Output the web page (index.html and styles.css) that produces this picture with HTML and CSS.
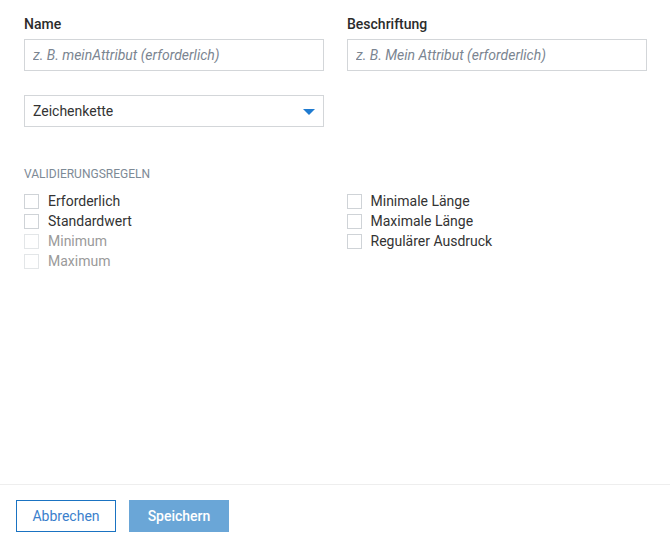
FILE: index.html
```html
<!DOCTYPE html>
<html lang="de">
<head>
<meta charset="utf-8">
<title>Attribut</title>
<link rel="stylesheet" href="styles.css">
</head>
<body>
<div class="page">
  <div class="content">
    <div class="row">
      <div class="field">
        <label class="label">Name</label>
        <input class="input" type="text" placeholder="z. B. meinAttribut (erforderlich)">
      </div>
      <div class="field">
        <label class="label">Beschriftung</label>
        <input class="input" type="text" placeholder="z. B. Mein Attribut (erforderlich)">
      </div>
    </div>
    <div class="row">
      <div class="select">
        <span>Zeichenkette</span>
        <svg class="arrow" width="12" height="7" viewBox="0 0 12 7"><polygon points="0,0 12,0 6,6" fill="#1f7bd0"/></svg>
      </div>
    </div>
    <div class="section-title">VALIDIERUNGSREGELN</div>
    <div class="rules">
      <div class="col">
        <div class="check"><span class="box"></span><span>Erforderlich</span></div>
        <div class="check"><span class="box"></span><span>Standardwert</span></div>
        <div class="check disabled"><span class="box"></span><span>Minimum</span></div>
        <div class="check disabled"><span class="box"></span><span>Maximum</span></div>
      </div>
      <div class="col">
        <div class="check"><span class="box"></span><span>Minimale Länge</span></div>
        <div class="check"><span class="box"></span><span>Maximale Länge</span></div>
        <div class="check"><span class="box"></span><span>Regulärer Ausdruck</span></div>
      </div>
    </div>
  </div>
  <div class="footer">
    <button class="btn btn-outline">Abbrechen</button>
    <button class="btn btn-primary">Speichern</button>
  </div>
</div>
</body>
</html>
```
FILE: styles.css
```css
html, body {
  margin: 0;
  padding: 0;
  background: #fff;
}
body {
  font-family: Roboto, "Liberation Sans", sans-serif;
  font-size: 14px;
  color: #333;
}
.page {
  height: 548px;
  display: flex;
  flex-direction: column;
}
.content {
  flex: 1;
  padding: 15px 24px 0;
}
.row {
  display: flex;
  gap: 23px;
  margin-bottom: 24px;
}
.field {
  display: flex;
  flex-direction: column;
  width: 300px;
}
.label {
  font-weight: 500;
  font-size: 14px;
  line-height: 18px;
  color: #2b2b2b;
  margin-bottom: 6px;
}
.input {
  box-sizing: border-box;
  width: 300px;
  height: 32px;
  border: 1px solid #d3d6d9;
  padding: 0 8px;
  font-family: inherit;
  font-size: 14px;
  color: #333;
  outline: none;
}
.input::placeholder {
  font-style: italic;
  color: #7b8591;
}
.select {
  box-sizing: border-box;
  width: 300px;
  height: 32px;
  border: 1px solid #d3d6d9;
  padding: 0 8px;
  display: flex;
  align-items: center;
  justify-content: space-between;
  color: #333;
}
.arrow {
  margin-top: 3px;
}
.section-title {
  margin-top: 40px;
  font-size: 12px;
  line-height: 14px;
  color: #7d8a96;
}
.rules {
  display: flex;
  gap: 23px;
  margin-top: 10px;
}
.col {
  width: 300px;
  display: flex;
  flex-direction: column;
}
.check {
  display: flex;
  align-items: center;
  gap: 9px;
  height: 20px;
  color: #333;
}
.box {
  box-sizing: border-box;
  width: 15px;
  height: 15px;
  border: 1px solid #cfd3d7;
  background: #fff;
}
.check.disabled {
  color: #9a9a9a;
}
.check.disabled .box {
  border-color: #e3e6e8;
}
.footer {
  border-top: 1px solid #eeeeee;
  padding: 15px 16px 16px;
  display: flex;
  gap: 13px;
}
.btn {
  box-sizing: border-box;
  width: 100px;
  height: 32px;
  font-family: inherit;
  font-size: 14px;
  cursor: pointer;
}
.btn-outline {
  background: #fff;
  border: 1px solid #1a73c2;
  color: #3b7fcc;
}
.btn-primary {
  background: #6aa6d7;
  border: none;
  color: #fff;
  font-weight: 500;
}
```
